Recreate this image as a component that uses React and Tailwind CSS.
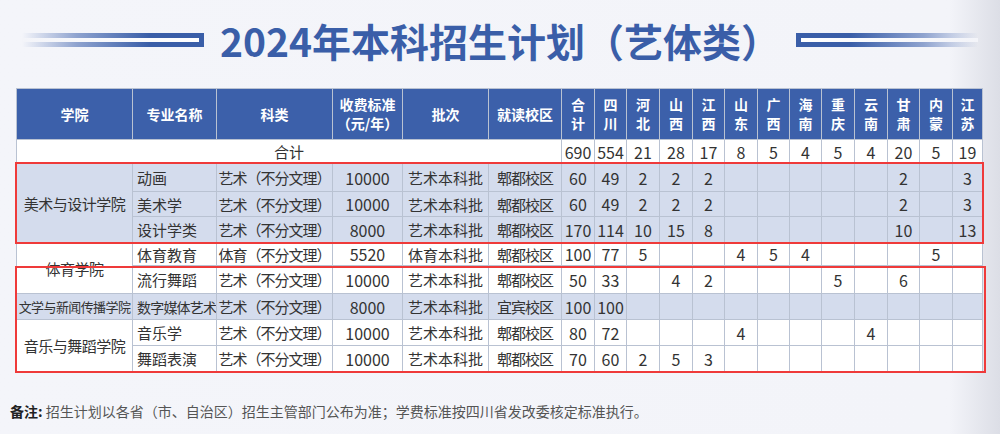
import React from 'react';

const provinces = ['合计', '四川', '河北', '山西', '江西', '山东', '广西', '海南', '重庆', '云南', '甘肃', '内蒙', '江苏'];
const provWidths = [73, 33, 32, 33, 33, 32, 33, 32, 32, 33, 33, 32, 33];

const rows = [
  { college: '美术与设计学院', span: 3, major: '动画', type: '艺术（不分文理）', fee: '10000', batch: '艺术本科批', campus: '郫都校区', nums: ['60', '49', '2', '2', '2', '', '', '', '', '', '2', '', '3'], blue: true, h: 'h-[28px]' },
  { major: '美术学', type: '艺术（不分文理）', fee: '10000', batch: '艺术本科批', campus: '郫都校区', nums: ['60', '49', '2', '2', '2', '', '', '', '', '', '2', '', '3'], blue: true, h: 'h-[25px]' },
  { major: '设计学类', type: '艺术（不分文理）', fee: '8000', batch: '艺术本科批', campus: '郫都校区', nums: ['170', '114', '10', '15', '8', '', '', '', '', '', '10', '', '13'], blue: true, h: 'h-[26px]' },
  { college: '体育学院', span: 2, major: '体育教育', type: '体育（不分文理）', fee: '5520', batch: '体育本科批', campus: '郫都校区', nums: ['100', '77', '5', '', '', '4', '5', '4', '', '', '', '5', ''], h: 'h-[23px]' },
  { major: '流行舞蹈', type: '艺术（不分文理）', fee: '10000', batch: '艺术本科批', campus: '郫都校区', nums: ['50', '33', '', '4', '2', '', '', '', '5', '', '6', '', ''], h: 'h-[28px]' },
  { college: '文学与新闻传播学院', span: 1, major: '数字媒体艺术', type: '艺术（不分文理）', fee: '8000', batch: '艺术本科批', campus: '宜宾校区', nums: ['100', '100', '', '', '', '', '', '', '', '', '', '', ''], blue: true, h: 'h-[26px]' },
  { college: '音乐与舞蹈学院', span: 2, major: '音乐学', type: '艺术（不分文理）', fee: '10000', batch: '艺术本科批', campus: '郫都校区', nums: ['80', '72', '', '', '', '4', '', '', '', '4', '', '', ''], h: 'h-[26px]' },
  { major: '舞蹈表演', type: '艺术（不分文理）', fee: '10000', batch: '艺术本科批', campus: '郫都校区', nums: ['70', '60', '2', '5', '3', '', '', '', '', '', '', '', ''], h: 'h-[26px]' },
];

const totals = ['690', '554', '21', '28', '17', '8', '5', '4', '5', '4', '20', '5', '19'];

const td = 'border border-[#b9c2d2] p-0 text-center whitespace-nowrap overflow-hidden';

function TitleLine({ right }) {
  return (
    <div className={`relative h-[14px] w-[182px] ${right ? 'bg-gradient-to-l' : 'bg-gradient-to-r'} from-transparent via-[#8fa3cf] via-30% to-[#3a5ea8] to-70%`}>
      <div className={`absolute top-[5px] h-[4px] ${right ? 'left-[5px] right-0 bg-gradient-to-l' : 'left-0 right-[5px] bg-gradient-to-r'} from-[#f3f4f9] to-white`} />
    </div>
  );
}

export default function App() {
  return (
    <div className="w-[1000px] h-[434px] overflow-hidden bg-gradient-to-r from-[#f4f5fa] via-[#f3f4f9] via-95% to-[#dcdee6] font-['Noto_Sans_CJK_SC','Noto_Sans',sans-serif] text-[#333]">
      {/* title */}
      <div className="h-[88px] flex items-center justify-center gap-[16px] pb-[8px]">
        <TitleLine />
        <h1 className="text-[39px] leading-none font-bold text-[#3a5ea8]">2024年本科招生计划（艺体类）</h1>
        <TitleLine right />
      </div>

      <div className="relative ml-[16px] w-[967px]">
        <table className="table-fixed border-collapse w-[967px] text-[15px] leading-none">
          <colgroup>
            <col className="w-[116px]" />
            <col className="w-[84px]" />
            <col className="w-[116px]" />
            <col className="w-[70px]" />
            <col className="w-[86px]" />
            {provWidths.map((w, i) => (
              <col key={i} style={{ width: w }} />
            ))}
          </colgroup>
          <thead>
            <tr className="h-[51px] bg-[#3c60aa] text-white text-[14px] font-bold">
              <th className={td}>学院</th>
              <th className={td}>专业名称</th>
              <th className={td}>科类</th>
              <th className={`${td} leading-[19px] text-[14px]`}>收费标准<br />（元/年）</th>
              <th className={td}>批次</th>
              <th className={td}>就读校区</th>
              {provinces.map((p) => (
                <th key={p} className={`${td} text-[14px] leading-[19px] font-semibold`}>
                  {p[0]}<br />{p[1]}
                </th>
              ))}
            </tr>
          </thead>
          <tbody>
            <tr className="h-[24px] bg-white">
              <td className={td} colSpan={6}>合计</td>
              {totals.map((n, i) => (
                <td key={i} className={`${td} text-[16px]`}>{n}</td>
              ))}
            </tr>
            {rows.map((r, i) => (
              <tr key={i} className={`${r.h} ${r.blue ? 'bg-[#d4dced]' : 'bg-white'}`}>
                {r.college && (
                  <td rowSpan={r.span} className={`${td} ${r.college === '文学与新闻传播学院' ? 'text-[13px] tracking-[-0.6px]' : 'tracking-[-0.5px]'}`}>
                    {r.college}
                  </td>
                )}
                <td className={`${td} text-left pl-[4px] ${r.major.length > 5 ? 'text-[14px] tracking-[-0.8px]' : ''}`}>{r.major}</td>
                <td className={`${td} tracking-[-1px]`}>{r.type}</td>
                <td className={`${td} text-[16px]`}>{r.fee}</td>
                <td className={td}>{r.batch}</td>
                <td className={`${td} tracking-[-1px]`}>{r.campus}</td>
                {r.nums.map((n, j) => (
                  <td key={j} className={`${td} text-[16px]`}>{n}</td>
                ))}
              </tr>
            ))}
          </tbody>
        </table>
        {/* highlight boxes */}
        <div className="absolute left-[-1px] top-[74px] w-[969px] h-[82px] border-2 border-[#ef3a3a] pointer-events-none" />
        <div className="absolute left-[-1px] top-[178px] w-[971px] h-[107px] border-2 border-[#ef3a3a] pointer-events-none" />
      </div>

      <p className="mt-[29px] ml-[10px] text-[14px] text-[#555]">
        <span className="font-bold text-[#222]">备注:</span> 招生计划以各省（市、自治区）招生主管部门公布为准；学费标准按四川省发改委核定标准执行。
      </p>
    </div>
  );
}
